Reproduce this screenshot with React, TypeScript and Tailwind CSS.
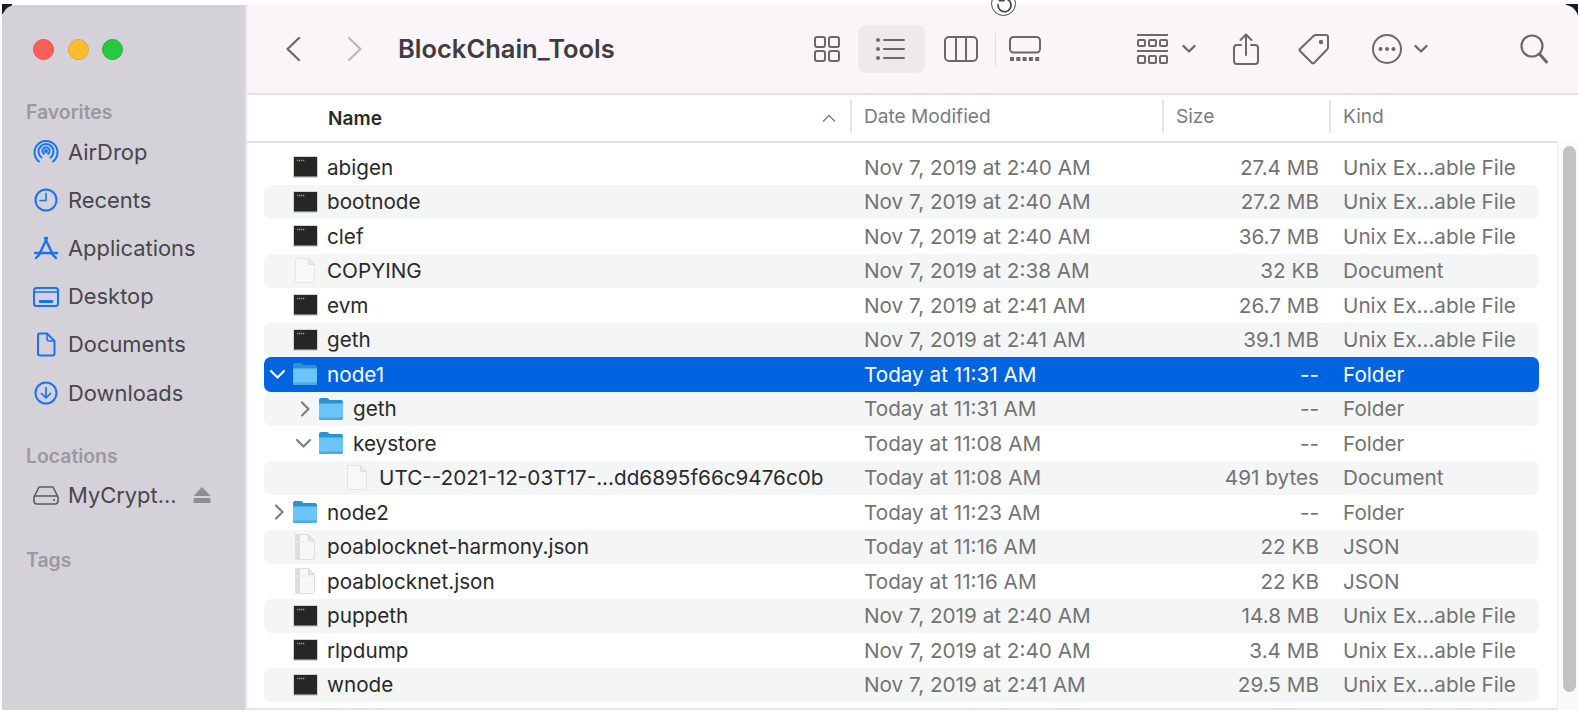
import type { ReactNode } from 'react'

type Kind = 'exec' | 'doc' | 'json' | 'folder'

type Row = {
  name: string
  date: string
  size: string
  kind: string
  icon: Kind
  depth?: number
  open?: boolean
  closed?: boolean
  selected?: boolean
}

const EXEC = 'Unix Ex...able File'

const ROWS: Row[] = [
  { name: 'abigen', date: 'Nov 7, 2019 at 2:40 AM', size: '27.4 MB', kind: EXEC, icon: 'exec' },
  { name: 'bootnode', date: 'Nov 7, 2019 at 2:40 AM', size: '27.2 MB', kind: EXEC, icon: 'exec' },
  { name: 'clef', date: 'Nov 7, 2019 at 2:40 AM', size: '36.7 MB', kind: EXEC, icon: 'exec' },
  { name: 'COPYING', date: 'Nov 7, 2019 at 2:38 AM', size: '32 KB', kind: 'Document', icon: 'doc' },
  { name: 'evm', date: 'Nov 7, 2019 at 2:41 AM', size: '26.7 MB', kind: EXEC, icon: 'exec' },
  { name: 'geth', date: 'Nov 7, 2019 at 2:41 AM', size: '39.1 MB', kind: EXEC, icon: 'exec' },
  { name: 'node1', date: 'Today at 11:31 AM', size: '--', kind: 'Folder', icon: 'folder', open: true, selected: true },
  { name: 'geth', date: 'Today at 11:31 AM', size: '--', kind: 'Folder', icon: 'folder', depth: 1, closed: true },
  { name: 'keystore', date: 'Today at 11:08 AM', size: '--', kind: 'Folder', icon: 'folder', depth: 1, open: true },
  { name: 'UTC--2021-12-03T17-...dd6895f66c9476c0b', date: 'Today at 11:08 AM', size: '491 bytes', kind: 'Document', icon: 'doc', depth: 2 },
  { name: 'node2', date: 'Today at 11:23 AM', size: '--', kind: 'Folder', icon: 'folder', closed: true },
  { name: 'poablocknet-harmony.json', date: 'Today at 11:16 AM', size: '22 KB', kind: 'JSON', icon: 'json' },
  { name: 'poablocknet.json', date: 'Today at 11:16 AM', size: '22 KB', kind: 'JSON', icon: 'json' },
  { name: 'puppeth', date: 'Nov 7, 2019 at 2:40 AM', size: '14.8 MB', kind: EXEC, icon: 'exec' },
  { name: 'rlpdump', date: 'Nov 7, 2019 at 2:40 AM', size: '3.4 MB', kind: EXEC, icon: 'exec' },
  { name: 'wnode', date: 'Nov 7, 2019 at 2:41 AM', size: '29.5 MB', kind: EXEC, icon: 'exec' },
]

function Svg({ w, h, children, className }: { w: number; h: number; children: ReactNode; className?: string }) {
  return (
    <svg width={w} height={h} viewBox={`0 0 ${w} ${h}`} fill="none" stroke="currentColor" strokeWidth="2" strokeLinecap="round" strokeLinejoin="round" className={`shrink-0 ${className ?? ''}`}>
      {children}
    </svg>
  )
}

function FileIcon({ icon }: { icon: Kind }) {
  if (icon === 'exec') {
    return (
      <svg width="25" height="22" viewBox="0 0 25 22" className="shrink-0">
        <rect x="0" y="0" width="25" height="22" rx="1" fill="#d4d4d4" />
        <rect x="1" y="1" width="23" height="19.500" fill="#262626" />
        <path d="M4 4.500h8" stroke="#57c464" strokeWidth="1.500" strokeDasharray="1.300 0.700" />
      </svg>
    )
  }
  if (icon === 'folder') {
    return (
      <svg width="24" height="24" viewBox="0 0 24 24" className="shrink-0">
        <path d="M0 3q0-2 2-2h6q1.500 0 2.500 2h11.500q2 0 2 2v16q0 2-2 2h-20q-2 0-2-2z" fill="#2a94d2" />
        <path d="M0 6.500h24v14.500q0 2-2 2h-20q-2 0-2-2z" fill="#6cc5f8" />
        <path d="M0 20.500h24v.5q0 2-2 2h-20q-2 0-2-2z" fill="#4ea9dd" />
      </svg>
    )
  }
  if (icon === 'json') {
    return (
      <svg width="22" height="26" viewBox="0 0 22 26" className="shrink-0">
        <path d="M1.500 0.500h13l6 6v18q0 1-1 1h-17q-1 0-1-1z" fill="#f7f7f7" stroke="#dedede" />
        <path d="M2 1h4v24h-4z" fill="#dcdcdc" />
        <path d="M2 8h18" stroke="#ececec" />
        <path d="M14.500 .5v6h6z" fill="#e4e4e4" stroke="#d8d8d8" />
      </svg>
    )
  }
  return (
    <svg width="22" height="25" viewBox="0 0 22 25" className="shrink-0">
      <path d="M1.500 0.500h13l6 6v17q0 1-1 1h-17q-1 0-1-1z" fill="#f8f8f8" stroke="#e4e4e4" />
      <path d="M14.500 .5v6h6z" fill="#ededed" stroke="#dcdcdc" />
    </svg>
  )
}

function FileRow({ row, striped }: { row: Row; striped: boolean }) {
  const depth = row.depth ?? 0
  const bg = row.selected ? 'bg-[#0064e1] text-white' : striped ? 'bg-[#f4f5f5]' : ''
  const sub = row.selected ? 'text-white' : 'text-[#737373]'
  return (
    <div className={`grid h-[34.5px] grid-cols-[600px_299px_156px_1fr] items-center rounded-[7px] text-[20.7px] ${bg}`}>
      <div className="flex items-center">
        {depth === 1 && <div className="w-[26px] shrink-0" />}
        {depth === 2 && <div className="w-[52px] shrink-0" />}
        <div className={`flex w-[29px] shrink-0 ${row.selected ? 'text-white' : 'text-[#808080]'}`}>
          {row.open && (
            <Svg w={29} h={14}>
              <path d="M7 4l6.500 6.500L20 4" strokeWidth="2.200" />
            </Svg>
          )}
          {row.closed && (
            <Svg w={29} h={18}>
              <path d="M12 2.500l6.500 6.500L12 15.500" strokeWidth="2.200" />
            </Svg>
          )}
        </div>
        <div className="flex w-[24px] shrink-0 justify-center">
          <FileIcon icon={row.icon} />
        </div>
        <span className={`ml-[10px] whitespace-nowrap ${row.selected ? 'text-white' : 'text-[#2a2a2a]'}`}>{row.name}</span>
      </div>
      <span className={sub}>{row.date}</span>
      <span className={`text-right ${sub}`}>{row.size}</span>
      <span className={`pl-[24px] ${sub}`}>{row.kind}</span>
    </div>
  )
}

function SideItem({ icon, label, right }: { icon: ReactNode; label: string; right?: ReactNode }) {
  return (
    <div className="flex h-[48.2px] items-center pl-[30px] text-[21.9px] text-[#48464b]">
      <div className="flex w-[28px] shrink-0 justify-center text-[#1a73f0]">{icon}</div>
      <span className="ml-[8px]">{label}</span>
      {right}
    </div>
  )
}

function SideLabel({ children, className }: { children: ReactNode; className?: string }) {
  return <div className={`pl-[24px] text-[19.4px] font-semibold text-[#9b98a0] ${className ?? ''}`}>{children}</div>
}

function Sidebar() {
  return (
    <aside className="flex w-[245px] shrink-0 flex-col rounded-tl-[14px] border-r-2 border-[#e6e3e8] bg-[#d4d1d9]">
      <div className="flex gap-[13.5px] pt-[34px] pl-[31px]">
        <div className="h-[21px] w-[21px] rounded-full border border-[#e8504a] bg-[#ff5f57]" />
        <div className="h-[21px] w-[21px] rounded-full border border-[#e5a52f] bg-[#febc2e]" />
        <div className="h-[21px] w-[21px] rounded-full border border-[#1fb03d] bg-[#28c840]" />
      </div>
      <SideLabel className="mt-[41px] leading-[22px]">Favorites</SideLabel>
      <div className="mt-[5px]">
        <SideItem label="AirDrop" icon={
          <Svg w={26} h={26}>
            <path d="M6 22.500a11.500 11.500 0 1 1 14 0" />
            <path d="M8.500 18.500a7.500 7.500 0 1 1 9 0" />
            <path d="M11 14.800a3.600 3.600 0 1 1 4 0" />
            <circle cx="13" cy="12" r="1" fill="currentColor" />
          </Svg>
        } />
        <SideItem label="Recents" icon={
          <Svg w={24} h={24}>
            <circle cx="12" cy="12" r="10.500" />
            <path d="M12 5.500v7h-6" strokeWidth="1.600" />
          </Svg>
        } />
        <SideItem label="Applications" icon={
          <Svg w={26} h={24}>
            <path d="M14 2L6 19" strokeWidth="2.400" />
            <path d="M12 2l8 17" strokeWidth="2.400" />
            <path d="M2 17h22" strokeWidth="2.400" />
            <path d="M3 22l2.500-2.500M23 22l-2.500-2.500" strokeWidth="2.400" />
          </Svg>
        } />
        <SideItem label="Desktop" icon={
          <Svg w={26} h={20}>
            <rect x="1" y="1" width="24" height="18" rx="2.500" />
            <path d="M1.500 5h23" strokeWidth="1.500" />
            <path d="M6 14.500h14" strokeWidth="3" strokeLinecap="butt" />
          </Svg>
        } />
        <SideItem label="Documents" icon={
          <Svg w={20} h={25}>
            <path d="M4 1.500h7l7.500 7.500v12.500q0 2-2 2h-12.500q-2 0-2-2v-18q0-2 2-2z" />
            <path d="M11 1.500v5q0 2.500 2.500 2.500h5" strokeWidth="1.600" />
          </Svg>
        } />
        <SideItem label="Downloads" icon={
          <Svg w={24} h={24}>
            <circle cx="12" cy="12" r="10.500" />
            <path d="M12 6.500v10M7.500 12.500l4.500 4.500 4.500-4.500" strokeWidth="1.700" />
          </Svg>
        } />
      </div>
      <SideLabel className="mt-[28px] leading-[22px]">Locations</SideLabel>
      <div className="mt-[4px]">
        <SideItem label="MyCrypt..." right={
          <svg width="18" height="16" viewBox="0 0 18 16" className="ml-[16px] shrink-0">
            <path d="M9 0l8.500 9h-17z" fill="#8f8d94" />
            <rect x="0.500" y="11" width="17" height="5" rx="1" fill="#8f8d94" />
          </svg>
        } icon={
          <span className="text-[#5c5a60]">
            <Svg w={26} h={20}>
              <path d="M6 2h14l5 10v4q0 3-3 3H4q-3 0-3-3v-4z" strokeWidth="1.600" />
              <path d="M1.500 11h23" strokeWidth="1.600" />
              <circle cx="21" cy="15" r="1" fill="currentColor" stroke="none" />
            </Svg>
          </span>
        } />
      </div>
      <SideLabel className="mt-[30px] leading-[22px]">Tags</SideLabel>
    </aside>
  )
}

function Toolbar() {
  return (
    <div className="flex h-[90px] shrink-0 items-center border-b-2 border-[#e3e1e4] bg-[#f9f5f9] text-[#6b686c]">
      <div className="flex items-center pl-[38px]">
        <Svg w={16} h={26}>
          <path d="M14 2L2.500 13 14 24" strokeWidth="2.300" />
        </Svg>
        <span className="ml-[46px] text-[#bcb9bd]">
          <Svg w={16} h={26}>
            <path d="M2 2l11.500 11L2 24" strokeWidth="2.300" />
          </Svg>
        </span>
        <span className="ml-[35px] text-[25.5px] font-semibold text-[#3f3d40]">BlockChain_Tools</span>
      </div>
      <div className="ml-[198px] flex items-center">
        <Svg w={28} h={28}>
          <rect x="2" y="2" width="10" height="10" rx="2" />
          <rect x="16" y="2" width="10" height="10" rx="2" />
          <rect x="2" y="16" width="10" height="10" rx="2" />
          <rect x="16" y="16" width="10" height="10" rx="2" />
        </Svg>
        <div className="ml-[17px] flex h-[48px] w-[67px] items-center justify-center rounded-[8px] bg-[#eee9ed]">
          <Svg w={30} h={24}>
            <path d="M8 3h20M8 12h20M8 21h20" />
            <circle cx="2" cy="3" r="1" fill="currentColor" />
            <circle cx="2" cy="12" r="1" fill="currentColor" />
            <circle cx="2" cy="21" r="1" fill="currentColor" />
          </Svg>
        </div>
        <div className="ml-[19px]">
          <Svg w={34} h={28}>
            <rect x="1" y="2" width="32" height="24" rx="4" />
            <path d="M12 2v24M22 2v24" />
          </Svg>
        </div>
        <div className="ml-[17px] h-[33px] w-px bg-[#e2dfe2]" />
        <div className="ml-[13px]">
          <svg width="32" height="26" viewBox="0 0 32 26" className="shrink-0">
            <rect x="1" y="1" width="30" height="15.500" rx="3.500" fill="none" stroke="currentColor" strokeWidth="2" />
            <path d="M1 23h30" stroke="currentColor" strokeWidth="4" strokeDasharray="4 2.300" />
          </svg>
        </div>
      </div>
      <div className="ml-[96px] flex items-center">
        <svg width="31" height="31" viewBox="0 0 31 31" className="shrink-0" fill="none" stroke="currentColor" strokeWidth="2">
          <path d="M0 1h31M0 17h31" />
          <rect x="1" y="6" width="7" height="6" rx="1" />
          <rect x="12" y="6" width="7" height="6" rx="1" />
          <rect x="23" y="6" width="7" height="6" rx="1" />
          <rect x="1" y="22" width="7" height="7" rx="1" />
          <rect x="12" y="22" width="7" height="7" rx="1" />
          <rect x="23" y="22" width="7" height="7" rx="1" />
        </svg>
        <span className="ml-[14px]">
          <Svg w={14} h={10}>
            <path d="M1.500 2l5.500 5.500L12.500 2" strokeWidth="2.300" />
          </Svg>
        </span>
      </div>
      <div className="ml-[37px]">
        <Svg w={26} h={33}>
          <path d="M8 12H4q-3 0-3 3v13q0 3 3 3h18q3 0 3-3V15q0-3-3-3h-4" />
          <path d="M13 22V2M7.500 7L13 1.500 18.500 7" />
        </Svg>
      </div>
      <div className="ml-[38px]">
        <Svg w={34} h={34}>
          <path d="M19 3h10q2 0 2 2v10q0 1.500-1 2.500L17 31q-1 1-2 0L3 19q-1-1 0-2L16.500 4q1-1 2.500-1z" />
          <circle cx="24" cy="10" r="1.200" fill="currentColor" />
        </Svg>
      </div>
      <div className="ml-[41px] flex items-center">
        <Svg w={30} h={30}>
          <circle cx="15" cy="15" r="14" />
          <circle cx="8.500" cy="15" r="1" fill="currentColor" />
          <circle cx="15" cy="15" r="1" fill="currentColor" />
          <circle cx="21.500" cy="15" r="1" fill="currentColor" />
        </Svg>
        <span className="ml-[12px]">
          <Svg w={14} h={10}>
            <path d="M1.500 2l5.500 5.500L12.500 2" strokeWidth="2.300" />
          </Svg>
        </span>
      </div>
      <div className="ml-[92px]">
        <Svg w={28} h={30}>
          <circle cx="12" cy="12" r="10.500" strokeWidth="2.200" />
          <path d="M19.500 20l7 8" strokeWidth="3" />
        </Svg>
      </div>
    </div>
  )
}

function HeaderBar() {
  return (
    <div className="grid h-[46px] shrink-0 grid-cols-[603px_312px_167px_1fr] text-[19.1px] text-[#7b7b7b]">
      <div className="flex items-center justify-between pr-[14px] pl-[81px]">
        <span className="font-semibold text-[#2a2a2a]">Name</span>
        <Svg w={14} h={8}>
          <path d="M1.500 7L7 1.500 12.500 7" strokeWidth="1.400" />
        </Svg>
      </div>
      <div className="my-[5px] mb-[8px] flex items-center border-l-2 border-[#e4e4e4] pl-[12px]">Date Modified</div>
      <div className="my-[5px] mb-[8px] flex items-center border-l-2 border-[#e4e4e4] pl-[12px]">Size</div>
      <div className="my-[5px] mb-[8px] flex items-center border-l-2 border-[#e4e4e4] pl-[12px]">Kind</div>
    </div>
  )
}

export default function App() {
  return (
    <div
      className="relative h-[710px] w-[1578px] overflow-hidden bg-white pt-[5px] pl-[2px]"
      style={{ fontFamily: 'Inter, "Noto Sans", sans-serif' }}
    >
      <div className="absolute top-[4px] left-[2px] h-[10px] w-[10px] bg-[#1c1a20]" />
      <div className="absolute top-[4px] right-0 h-[12px] w-[12px] bg-[#1c1a20]" />
      <div className="relative flex h-[705px]">
        <Sidebar />
        <main className="flex min-w-0 flex-1 flex-col overflow-hidden rounded-tr-[14px] bg-white">
          <Toolbar />
          <HeaderBar />
          <div className="flex min-h-0 flex-1">
            <div className="min-w-0 flex-1 border-t-2 border-b-2 border-[#e4e4e4] pt-[7px] pr-[18px] pl-[17px]">
              {ROWS.map((row, i) => (
                <FileRow key={i} row={row} striped={i % 2 === 1} />
              ))}
            </div>
            <div className="w-[21px] shrink-0 border-l border-[#ececec] bg-[#fafafa] pt-[5px] pl-[5px]">
              <div className="h-[546px] w-[13px] rounded-full bg-[#c2c2c2]" />
            </div>
          </div>
        </main>
      </div>
      <div className="absolute top-[-9px] left-[991px] flex h-[25px] w-[25px] items-center justify-center rounded-full border border-[#4a4a4a] bg-white text-[#4a4a4a]">
        <Svg w={18} h={18}>
          <path d="M5 5.500a6.500 6.500 0 1 1-2 4.500" strokeWidth="1.800" />
          <path d="M9 5.500H4.500V1.500" strokeWidth="1.800" />
        </Svg>
      </div>
    </div>
  )
}
